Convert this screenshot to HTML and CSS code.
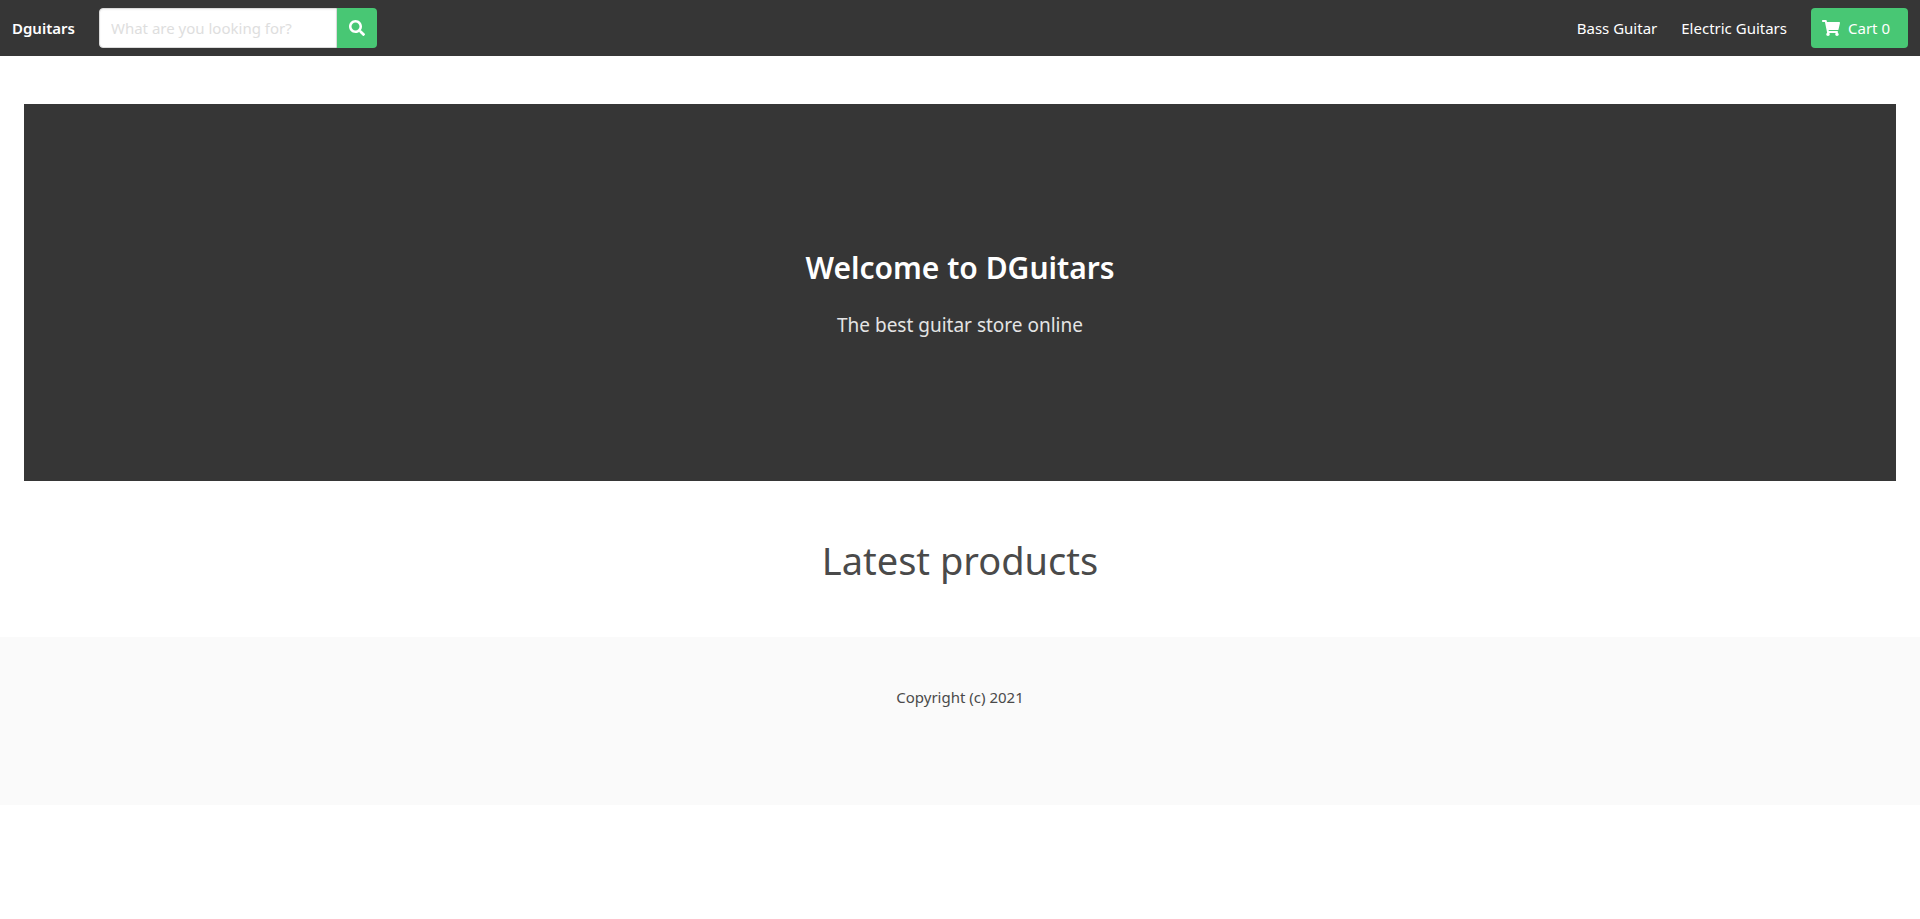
FILE: index.html
```html
<!DOCTYPE html>
<html lang="en">

<head>
    <meta charset="UTF-8">
    <meta name="viewport" content="width=device-width, initial-scale=1">
    <title>Dguitars</title>
    <link rel="stylesheet" href="styles.css">
</head>

<body>
    <nav class="navbar">
        <a href="/" class="navbar-item brand"><strong>Dguitars</strong></a>

        <form class="search" method="get" action="/search">
            <input type="text" class="input" placeholder="What are you looking for?" aria-label="Search" name="query">
            <button class="button search-button" aria-label="Search">
                <svg class="icon" viewBox="0 0 512 512"><path d="M505 442.700 405.300 343c-4.500-4.500-10.600-7-17-7H372c27.600-35.300 44-79.700 44-128C416 93.100 322.900 0 208 0S0 93.100 0 208s93.100 208 208 208c48.300 0 92.700-16.400 128-44v16.300c0 6.400 2.500 12.500 7 17l99.700 99.700c9.400 9.400 24.600 9.400 33.900 0l28.300-28.300c9.400-9.400 9.400-24.600.1-34zM208 336c-70.700 0-128-57.200-128-128 0-70.700 57.200-128 128-128 70.700 0 128 57.200 128 128 0 70.700-57.200 128-128 128z"/></svg>
            </button>
        </form>

        <div class="navbar-end">
            <a href="/bass-guitar" class="navbar-item">Bass Guitar</a>
            <a href="/electric-guitars" class="navbar-item">Electric Guitars</a>
            <a href="/cart" class="button cart-button">
                <svg class="icon icon-cart" viewBox="0 0 576 512"><path d="M528.100 301.300l47.300-208C578.800 78.300 567.400 64 552 64H159.200l-9.200-44.800C147.800 8 137.900 0 126.500 0H24C10.700 0 0 10.700 0 24v16c0 13.300 10.700 24 24 24h69.900l70.200 343.400C147.300 417.100 136 435.200 136 456c0 30.900 25.100 56 56 56s56-25.100 56-56c0-15.700-6.400-29.800-16.800-40h209.600C430.400 426.200 424 440.300 424 456c0 30.900 25.100 56 56 56s56-25.100 56-56c0-22.200-12.900-41.300-31.600-50.400l5.500-24.300c3.400-15-8-29.300-23.400-29.300H218.100l-6.500-32h293.100c11.200 0 20.900-7.800 23.400-18.700z"/></svg>
                <span>Cart 0</span>
            </a>
        </div>
    </nav>

    <section class="section">
        <div class="hero">
            <h1 class="title">Welcome to DGuitars</h1>
            <p class="subtitle">The best guitar store online</p>
        </div>

        <h2 class="latest">Latest products</h2>
    </section>

    <footer class="footer">
        <p>Copyright (c) 2021</p>
    </footer>
</body>

</html>
```

FILE: styles.css
```css
* {
    box-sizing: border-box;
    margin: 0;
    padding: 0;
}

body {
    background: #fff;
    color: #4a4a4a;
    font-family: "Noto Sans", sans-serif;
    font-size: 15px;
    line-height: 24px;
}

a {
    color: inherit;
    text-decoration: none;
}

/* navbar */
.navbar {
    display: flex;
    align-items: center;
    min-height: 56px;
    padding: 0 12px;
    background: #363636;
    color: #fff;
}

.brand {
    margin-right: 24px;
}

.brand strong {
    font-weight: 600;
}

.search {
    display: flex;
}

.input {
    width: 238px;
    height: 40px;
    padding: 0 11px;
    border: 1px solid #dbdbdb;
    border-radius: 4px 0 0 4px;
    box-shadow: inset 0 1px 2px rgba(10, 10, 10, 0.05);
    background: #fff;
    color: #363636;
    font: inherit;
}

.input::placeholder {
    color: #dedede;
}

.button {
    display: flex;
    align-items: center;
    justify-content: center;
    height: 40px;
    border: none;
    border-radius: 4px;
    background: #48c774;
    color: #fff;
    font: inherit;
    cursor: pointer;
}

.search-button {
    width: 40px;
    border-radius: 0 4px 4px 0;
}

.icon {
    width: 16px;
    height: 16px;
    fill: currentColor;
}

.navbar-end {
    display: flex;
    align-items: center;
    gap: 24px;
    margin-left: auto;
}

.cart-button {
    gap: 8px;
    padding: 0 18px 0 11px;
}

.icon-cart {
    width: 18px;
}

/* content */
.section {
    padding: 48px 24px;
    text-align: center;
}

.hero {
    padding: 144px 24px;
    background: #363636;
    color: #fff;
}

.title {
    margin-bottom: 25px;
    font-size: 30px;
    font-weight: 600;
    line-height: 40px;
}

.subtitle {
    color: #e4e4e4;
    font-size: 19px;
    line-height: 24px;
}

.latest {
    margin-top: 50px;
    font-size: 38px;
    font-weight: 400;
    line-height: 58px;
}

.footer {
    padding: 48px 24px 96px;
    background: #fafafa;
    text-align: center;
}
```
